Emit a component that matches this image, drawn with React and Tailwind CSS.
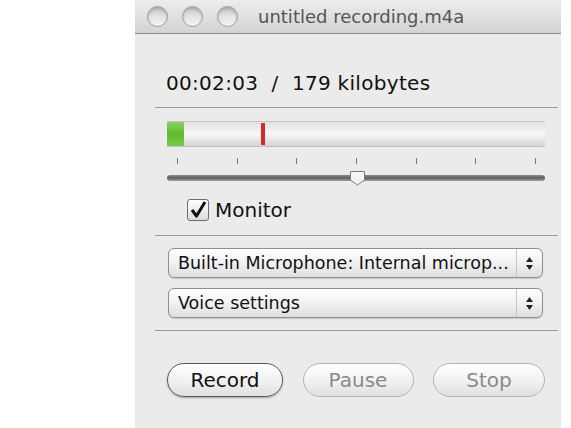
import React from 'react';

const font = { fontFamily: '"DejaVu Sans", "Noto Sans", sans-serif' };

const TrafficLight = () => (
  <div className="w-[21px] h-[21px] rounded-full border border-[#9c9c9c] bg-gradient-to-b from-[#c9c9c9] via-[#e4e4e4] to-[#f4f4f4] shadow-[inset_0_2px_3px_rgba(0,0,0,0.18)]" />
);

const ticks = [0, 1, 2, 3, 4, 5, 6];

const PopUp = ({ label }) => (
  <div className="h-[30px] ml-[33px] mr-[18px] flex items-stretch rounded-[6px] border border-[#8f8f8f] bg-gradient-to-b from-[#ffffff] via-[#f1f1f1] to-[#dedede] shadow-[0_1px_1px_rgba(0,0,0,0.15)]">
    <div className="flex-1 flex items-center pl-[9px] text-[17.5px] text-[#111] whitespace-nowrap overflow-hidden">{label}</div>
    <div className="w-[26px] border-l border-[#c4c4c4] flex items-center justify-center">
      <svg width="9" height="15" viewBox="0 0 9 15">
        <path d="M4.5 1 L8 6 L1 6 Z" fill="#222" />
        <path d="M4.5 14 L8 9 L1 9 Z" fill="#222" />
      </svg>
    </div>
  </div>
);

const PillButton = ({ label, active, w }) => (
  <div
    className={`h-[34px] ${w} rounded-full flex items-center justify-center text-[20px] bg-gradient-to-b from-[#ffffff] via-[#f2f2f2] to-[#e0e0e0] ${
      active
        ? 'border-[1.5px] border-[#5a5a5a] text-[#111] shadow-[0_1px_2px_rgba(0,0,0,0.3)]'
        : 'border border-[#b4b4b4] text-[#8a8a8a]'
    }`}
  >
    {label}
  </div>
);

export default function App() {
  return (
    <div className="w-full h-[428px] bg-white flex overflow-hidden" style={font}>
      <div className="ml-[135px] w-[426px] h-full flex flex-col bg-[#ebebeb]">
        {/* title bar */}
        <div className="h-[34px] shrink-0 flex items-center pl-[12px] bg-gradient-to-b from-[#ededed] to-[#d3d3d3] border-b border-[#8c8c8c]">
          <div className="flex gap-[14px]">
            <TrafficLight />
            <TrafficLight />
            <TrafficLight />
          </div>
          <div className="ml-[20px] text-[18px] text-[#555]">untitled recording.m4a</div>
        </div>

        <div className="mt-[37px] pl-[31px] text-[20px] text-[#111] whitespace-pre h-[24px] leading-[24px] tracking-[0.3px]">
          00:02:03  /  179 kilobytes
        </div>

        <div className="mt-[12px] ml-[20px] mr-[3px] h-px bg-[#9a9a9a]" />

        {/* level meter */}
        <div className="mt-[13px] ml-[32px] mr-[16px] h-[26px] relative rounded-[2px] border-y border-[#c2c2c2] bg-gradient-to-b from-[#e2e2e2] via-[#f7f7f7] to-[#d4d4d4]">
          <div className="absolute left-0 top-0 bottom-0 w-[17px] bg-gradient-to-b from-[#8ad35c] via-[#5fb82f] to-[#7cc94a]" />
          <div className="absolute left-[94px] top-[1px] bottom-[1px] w-[4px] bg-[#d42a2a]" />
        </div>

        {/* ticks */}
        <div className="mt-[11px] ml-[42px] mr-[25px] h-[6px] flex justify-between">
          {ticks.map((t) => (
            <div key={t} className="w-px h-full bg-[#777]" />
          ))}
        </div>

        {/* slider */}
        <div className="mt-[9px] ml-[32px] mr-[16px] h-[12px] relative">
          <div className="absolute left-0 right-0 top-[2px] h-[6px] rounded-full bg-gradient-to-b from-[#8a8a8a] via-[#5f5f5f] to-[#a3a3a3]" />
          <svg className="absolute left-[182px] top-[-2px]" width="17" height="15" viewBox="0 0 17 15">
            <path d="M1.5 0.5 H15.5 V9 L8.5 14 L1.5 9 Z" fill="#f4f4f4" stroke="#7a7a7a" />
          </svg>
        </div>

        {/* monitor checkbox */}
        <div className="mt-[13px] ml-[52px] flex items-center gap-[6px]">
          <div className="w-[22px] h-[22px] rounded-[3px] border border-[#6f6f6f] bg-gradient-to-b from-[#ffffff] to-[#dcdcdc] flex items-center justify-center">
            <svg width="18" height="18" viewBox="0 0 18 18">
              <path d="M3 9 L7.5 15 L16 1" fill="none" stroke="#111" strokeWidth="3" strokeLinejoin="round" />
            </svg>
          </div>
          <span className="text-[20px] text-[#111] leading-[24px]">Monitor</span>
        </div>

        <div className="mt-[13px] ml-[20px] mr-[3px] h-px bg-[#9a9a9a]" />

        <div className="mt-[12px] flex flex-col gap-[10px]">
          <PopUp label="Built-in Microphone: Internal microp..." />
          <PopUp label="Voice settings" />
        </div>

        <div className="mt-[12px] ml-[20px] mr-[3px] h-px bg-[#9a9a9a]" />

        <div className="mt-[32px] ml-[32px] mr-[16px] flex justify-between">
          <PillButton label="Record" active w="w-[116px]" />
          <PillButton label="Pause" w="w-[111px]" />
          <PillButton label="Stop" w="w-[112px]" />
        </div>
      </div>
    </div>
  );
}
